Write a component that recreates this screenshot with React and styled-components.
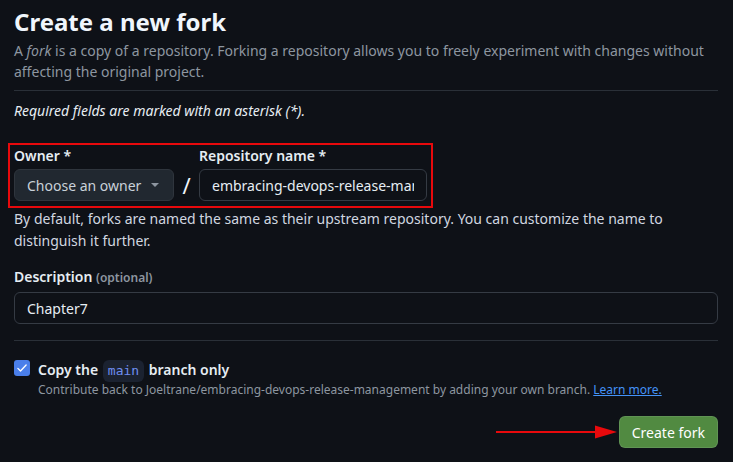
import styled, { createGlobalStyle } from "styled-components";

const GlobalStyle = createGlobalStyle`
    body {
        margin: 0;
        background: #0e1117;
        font-family: "Noto Sans", "DejaVu Sans", sans-serif;
        color: #e6edf3;
    }
`;

export default function App() {
    return (
        <>
            <GlobalStyle />
            <Page>
                <Title>Create a new fork</Title>
                <Lead>
                    A <em>fork</em> is a copy of a repository. Forking a repository allows you to freely experiment with changes without affecting the original project.
                </Lead>
                <Divider />
                <Required>Required fields are marked with an asterisk (*).</Required>

                <Highlight>
                    <Field>
                        <Label>Owner *</Label>
                        <Select>
                            Choose an owner
                            <Caret />
                        </Select>
                    </Field>
                    <Slash>/</Slash>
                    <Field>
                        <Label>Repository name *</Label>
                        <Input width="228px" value="embracing-devops-release-management" readOnly />
                    </Field>
                </Highlight>
                <Helper>
                    By default, forks are named the same as their upstream repository. You can customize the name to distinguish it further.
                </Helper>

                <DescLabel>
                    Description <Optional>(optional)</Optional>
                </DescLabel>
                <Input width="100%" value="Chapter7" readOnly />

                <Divider top="16px" />

                <CheckRow>
                    <Checkbox>
                        <svg width="12" height="12" viewBox="0 0 16 16">
                            <path d="M2.5 8.5l3.5 3.5 7.5-8" fill="none" stroke="#fff" strokeWidth="1.8" strokeLinecap="round" strokeLinejoin="round" />
                        </svg>
                    </Checkbox>
                    <CheckLabel>
                        Copy the <Code>main</Code> branch only
                    </CheckLabel>
                </CheckRow>
                <Note>
                    Contribute back to Joeltrane/embracing-devops-release-management by adding your own branch. <Link>Learn more.</Link>
                </Note>

                <Actions>
                    <svg width="122" height="16" viewBox="0 0 122 16">
                        <line x1="0" y1="8" x2="102" y2="8" stroke="#e8090c" strokeWidth="2" />
                        <polygon points="99,1.5 121,8 99,14.5" fill="#e8090c" />
                    </svg>
                    <Button>Create fork</Button>
                </Actions>
            </Page>
        </>
    );
}

const Page = styled.div`
    width: 704px;
    padding: 4px 15px 0 14px;
`;

const Title = styled.h1`
    margin: 0;
    font-size: 24px;
    font-weight: 700;
    line-height: 36px;
    color: #f0f6fc;
`;

const Lead = styled.p`
    margin: 0;
    font-size: 14px;
    line-height: 21px;
    color: #8d96a0;
`;

const Divider = styled.div`
    margin-top: ${props => props.top || "8px"};
    border-top: 1px solid #2a3038;
`;

const Required = styled.p`
    margin: 9px 0 0;
    font-size: 14px;
    line-height: 21px;
    font-style: italic;
    color: #e6edf3;
`;

const Highlight = styled.div`
    display: inline-flex;
    align-items: flex-end;
    margin: 22px 0 0 -6px;
    padding: 0 4px 5px 4px;
    border: 2px solid #e8090c;
`;

const Field = styled.div`
    display: flex;
    flex-direction: column;
    gap: 3px;
`;

const Label = styled.span`
    font-size: 14px;
    font-weight: 600;
    line-height: 21px;
    color: #e6edf3;
`;

const Select = styled.div`
    box-sizing: border-box;
    display: flex;
    align-items: center;
    justify-content: space-between;
    width: 160px;
    height: 32px;
    padding: 0 14px 0 12px;
    background: #212830;
    border: 1px solid #2f353d;
    border-radius: 6px;
    font-size: 14px;
    white-space: nowrap;
    color: #c9d1d9;
`;

const Caret = styled.span`
    width: 0;
    height: 0;
    border-left: 4px solid transparent;
    border-right: 4px solid transparent;
    border-top: 4px solid #8d96a0;
`;

const Slash = styled.span`
    width: 25px;
    height: 32px;
    text-align: center;
    font-size: 22px;
    line-height: 32px;
    color: #f0f6fc;
`;

const Input = styled.input`
    box-sizing: border-box;
    width: ${props => props.width};
    height: 32px;
    padding: 0 12px;
    background: #0e1117;
    border: 1px solid #353b44;
    border-radius: 6px;
    font-family: "Noto Sans", sans-serif;
    font-size: 14px;
    color: #e6edf3;
    outline: none;
`;

const Helper = styled.p`
    margin: 0;
    font-size: 14px;
    line-height: 22px;
    color: #d1d7e0;
`;

const DescLabel = styled.p`
    margin: 14px 0 4px;
    font-size: 14px;
    font-weight: 600;
    line-height: 21px;
    color: #e6edf3;
`;

const Optional = styled.span`
    font-size: 12px;
    color: #8d96a0;
`;

const CheckRow = styled.div`
    display: flex;
    align-items: center;
    gap: 8px;
    margin-top: 18px;
    height: 22px;
`;

const Checkbox = styled.span`
    display: flex;
    align-items: center;
    justify-content: center;
    width: 16px;
    height: 16px;
    margin-top: -4px;
    border-radius: 3px;
    background: #4a7fea;
`;

const CheckLabel = styled.span`
    font-size: 14px;
    font-weight: 600;
    line-height: 22px;
    color: #e6edf3;
`;

const Code = styled.code`
    display: inline-block;
    margin: 0 1px;
    padding: 0 5px;
    line-height: 22px;
    border-radius: 6px;
    background: #1b2230;
    font-family: "DejaVu Sans Mono", monospace;
    font-size: 13px;
    font-weight: 400;
    color: #6f8ef0;
`;

const Note = styled.p`
    margin: 0 0 0 24px;
    font-size: 12px;
    line-height: 18px;
    color: #8d96a0;
`;

const Link = styled.a`
    color: #4493f8;
    text-decoration: underline;
`;

const Actions = styled.div`
    display: flex;
    justify-content: flex-end;
    align-items: center;
    gap: 1px;
    margin-top: 17px;
`;

const Button = styled.button`
    height: 32px;
    padding: 0 12px;
    background: #518a41;
    border: 1px solid rgba(240, 246, 252, 0.1);
    border-radius: 6px;
    font-family: "Noto Sans", sans-serif;
    font-size: 14px;
    color: #fff;
`;
